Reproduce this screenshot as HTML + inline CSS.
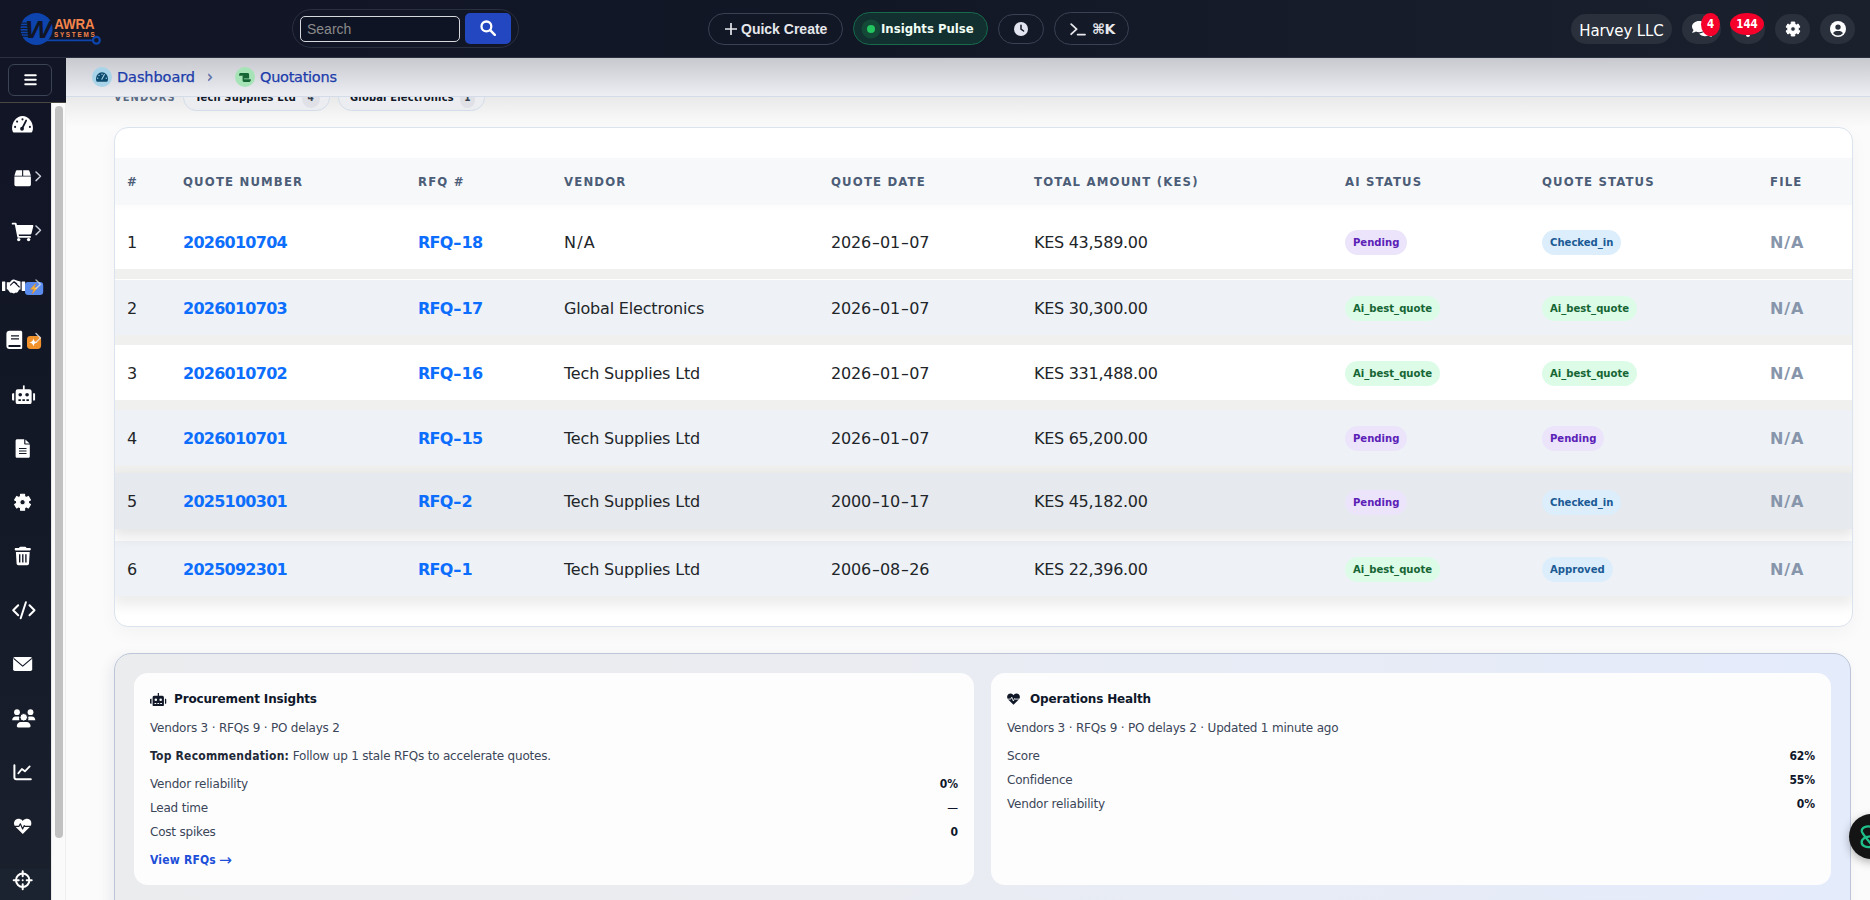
<!DOCTYPE html>
<html lang="en">
<head>
<meta charset="utf-8">
<title>Quotations</title>
<style>
*{box-sizing:border-box;margin:0;padding:0}
html,body{width:1870px;height:900px;overflow:hidden}
body{position:relative;background:#fbfbfc;font-family:"DejaVu Sans","Liberation Sans",sans-serif;font-size:16px;color:#212529}
.abs{position:absolute}
svg{display:block}
/* ---------- header ---------- */
#hdr{left:0;top:0;width:1870px;height:58px;background:linear-gradient(90deg,#111526 0%,#121726 45%,#1a212d 100%);border-bottom:1px solid #2b3040;z-index:30}
.pill{position:absolute;border-radius:999px;display:flex;align-items:center;justify-content:center}
.hp{background:#2a303c}
.bd{background:#f5002a;border-radius:50%;color:#fff;font:bold 11.5px/22px "DejaVu Sans Condensed","DejaVu Sans",sans-serif;text-align:center;z-index:2}
/* ---------- sidebar ---------- */
#sbtop{left:0;top:58px;width:66px;height:45px;background:#111526;border-bottom:1px solid #4a4640;z-index:25}
#side{left:0;top:103px;width:51px;height:797px;background:linear-gradient(180deg,#111526 0%,#131826 45%,#181e2b 85%,#1a202c 100%);z-index:20}
#side svg{position:absolute}
#sfoot{left:0;top:766px;width:51px;height:31px;background:#1b2230}
#strack{left:51px;top:103px;width:15px;height:797px;background:#fafafa;border-left:1px solid #e8e8e8;border-right:1px solid #efefef;z-index:20}
#sthumb{left:55px;top:106px;width:8px;height:732px;background:#c1c1c1;border-radius:4px;z-index:21}
/* ---------- breadcrumb ---------- */
#crumb{left:66px;top:58px;width:1804px;height:39px;background:linear-gradient(180deg,#c8c9cf 0%,#d4d6dc 35%,#eceef3 100%);border-bottom:1px solid #d3dce8;z-index:15;font-size:14.500px;color:#1c3cab;letter-spacing:-.35px;-webkit-text-stroke:.25px #1c3cab}
#crumb .ic{position:absolute;top:9px;width:20px;height:20px;border-radius:50%}
#crumb span{position:absolute;top:9px;line-height:20px;white-space:nowrap}
/* ---------- content ---------- */
#topshade{left:66px;top:97px;width:1804px;height:60px;background:linear-gradient(180deg,#e9e9ea 0%,#f0f0f1 18%,#f7f7f8 36%,#fbfbfb 52%,rgba(251,251,252,0) 100%);z-index:1}
#chips{left:114px;top:84px;height:27px;z-index:2;display:flex;align-items:center;white-space:nowrap}
#chips .lbl{font:bold 11px "DejaVu Sans Condensed","DejaVu Sans",sans-serif;letter-spacing:1.1px;color:#5b6b84;width:69px}
.chip{height:27px;border:1px solid #d3dde9;border-radius:14px;background:#ecedf1;display:flex;align-items:center;padding:0 9px 0 11px;justify-content:space-between;font:bold 11px "DejaVu Sans Condensed","DejaVu Sans",sans-serif;color:#111827;margin-right:8.500px;letter-spacing:.2px}
.chip b{display:inline-block;width:20px;height:20px;border-radius:10px;background:#dfe1e6;color:#374151;text-align:center;line-height:20px;font-size:10px;margin-left:6px}
#card{left:114px;top:127px;width:1739px;height:500px;background:#fff;border:1px solid #dbe3ee;border-radius:14px;box-shadow:0 6px 18px rgba(15,23,42,.035);z-index:3;overflow:hidden}
.row{position:absolute;left:0;width:1737px;height:55px;box-shadow:0 10px 0 0 #f0f0ef}
.row.last{box-shadow:0 8px 12px 2px rgba(0,0,0,.075)}
.row.w{background:#fff}
.row.b{background:#eef2f7}
.row.h .c{padding-top:0}
.row.h .bdg{top:1.500px}
.row.h{background:#e6e9ed;box-shadow:0 6px 12px 2px rgba(0,0,0,.1);z-index:2}
#thead{position:absolute;left:0;top:30px;width:1737px;height:47px;background:#f7f8fa;box-shadow:0 2px 4px 2px rgba(0,0,0,.012)}
.c{position:absolute;top:0;height:100%;display:flex;align-items:center;white-space:nowrap}
#thead .c{font:bold 13px "DejaVu Sans Condensed","DejaVu Sans",sans-serif;letter-spacing:1.17px;color:#4c5d77;padding-bottom:1px}
.c0{left:12px}.c1{left:68px}.c2{left:303px}.c3{left:449px}.c4{left:716px}.c5{left:919px}.c6{left:1230px}.c7{left:1427px}.c8{left:1655px}
.row .c{letter-spacing:-.18px;color:#212529;padding-top:1px}
.hy{display:inline-block;transform:scaleX(1.45);margin:0 1.75px}
.lk .hy{margin:0 1.4px 0 1.6px;transform:scaleX(1.3)}
.row .c5{letter-spacing:-.28px}
.row .lk{font-weight:bold;color:#0d6efd;letter-spacing:-.74px}
.row .na{font-weight:bold;color:#8795ab;letter-spacing:.9px}
.bdg{display:inline-block;position:relative;top:.5px;height:25px;line-height:25px;padding:0 8px;border-radius:13px;font:bold 11.2px/25px "DejaVu Sans Condensed","DejaVu Sans",sans-serif;letter-spacing:0}
.pu{background:#ebe4fb;color:#5b21b6}
.gr{background:#dcfce7;color:#166534}
.bl{background:#dceefb;color:#1b5a94}
/* ---------- insights ---------- */
#ins{left:114px;top:653px;width:1737px;height:270px;border:1px solid #bcc6d8;border-radius:17px;background:linear-gradient(90deg,#ebecee 0%,#eaecf1 40%,#e4ebfb 100%);box-shadow:-4px 4px 14px rgba(15,23,42,.07);z-index:3}
.ic2{position:absolute;top:19px;width:840px;height:212px;background:#fdfdfe;border-radius:14px;font-size:12px;color:#3b4658;letter-spacing:-.2px}
.ic2 .t{position:absolute;left:40px;top:19px;font-weight:bold;font-size:12px;color:#0f172a;letter-spacing:-.16px;line-height:14px}
.ic2 .l{position:absolute;left:16px;line-height:14px;white-space:nowrap}
.ic2 .r{position:absolute;right:16px;line-height:14px;font-weight:bold;color:#0f172a;font-family:"DejaVu Sans Condensed","DejaVu Sans",sans-serif;letter-spacing:-.1px}
.ic2 b{color:#1f2937;font-family:"DejaVu Sans Condensed","DejaVu Sans",sans-serif;letter-spacing:.22px}
#fab{left:1849px;top:814px;width:45px;height:45px;border-radius:50%;background:#141414;z-index:40;box-shadow:0 3px 10px rgba(0,0,0,.3)}
</style>
</head>
<body>
<svg width="0" height="0" style="position:absolute"><defs>
<symbol id="i-gear" viewBox="0 0 24 24"><path fill-rule="evenodd" stroke="currentColor" stroke-width="1.6" stroke-linejoin="round" fill="currentColor" transform="translate(1.2 1.2) scale(.9)" d="M9.02 3.72 L9.02 0.38 L14.98 0.38 L14.98 3.72 L17.68 5.28 L20.57 3.60 L23.56 8.77 L20.66 10.44 L20.66 13.56 L23.56 15.23 L20.57 20.40 L17.68 18.72 L14.98 20.28 L14.98 23.62 L9.02 23.62 L9.02 20.28 L6.32 18.72 L3.43 20.40 L0.44 15.23 L3.34 13.56 L3.34 10.44 L0.44 8.77 L3.43 3.60 L6.32 5.28Z M15.90 12.00 A3.9 3.9 0 1 0 8.10 12.00 A3.9 3.9 0 1 0 15.90 12.00Z"/></symbol>
<symbol id="i-robot" viewBox="0 0 32 26"><path fill="currentColor" fill-rule="evenodd" d="M15 0h2.400v5.500H24a3 3 0 0 1 3 3V23a3 3 0 0 1-3 3H8a3 3 0 0 1-3-3V8.500a3 3 0 0 1 3-3h7zM11.300 10.600a2.500 2.500 0 1 0 0 5 2.500 2.500 0 0 0 0-5zm9.400 0a2.500 2.500 0 1 0 0 5 2.500 2.500 0 0 0 0-5zM8.800 19.400v2.200h3.400v-2.200zm5.500 0v2.200h3.400v-2.200zm5.500 0v2.200h3.400v-2.200zM0 12.500a1.500 1.500 0 0 1 1.500-1.500H3v10H1.500A1.500 1.500 0 0 1 0 19.500zM29 11h1.500a1.500 1.500 0 0 1 1.500 1.500v7a1.500 1.500 0 0 1-1.500 1.500H29z"/></symbol>
<symbol id="i-heart" viewBox="0 0 26 24"><path fill="currentColor" d="M13 23.500L2.300 12.800C-.6 9.900-.5 5.200 2.600 2.500 5.300.1 9.400.6 11.900 3.100L13 4.300l1.100-1.200C16.600.6 20.700.1 23.400 2.500c3.100 2.700 3.200 7.400.3 10.300z"/><path fill="none" stroke="var(--bg)" stroke-width="1.7" stroke-linejoin="round" d="M1 12.200h6.500l2-3.800 3.300 7.600 2.400-5 1 1.200H25"/></symbol>
<symbol id="i-comments" viewBox="0 0 20 16"><path fill="currentColor" d="M7.200 0C3.200 0 0 2.500 0 5.600c0 1.300.6 2.500 1.500 3.400-.3 1.100-1.200 2.100-1.300 2.200-.2.200 0 .500.200.500 1.500 0 2.700-.7 3.400-1.200 1 .4 2.200.7 3.400.7 4 0 7.200-2.500 7.200-5.600S11.200 0 7.200 0z"/><path fill="currentColor" d="M15.800 6.300c-.3 3.400-3.600 5.900-7.800 6.100 1.100 1.700 3.300 2.800 5.800 2.800 1.200 0 2.300-.3 3.300-.7.700.5 1.800 1.200 3.300 1.200.3 0 .400-.3.200-.5 0 0-.9-1.100-1.300-2.200.9-.9 1.500-2 1.500-3.300 0-1.600-1-2.800-2.400-3.500z" transform="translate(-.8 0)"/></symbol>
</defs></svg>
<!-- HEADER -->
<div id="hdr" class="abs">
<svg class="abs" style="left:0;top:0" width="120" height="58" viewBox="0 0 120 58">
<circle cx="36.500" cy="28.900" r="16" fill="#0d44ad"/>
<g fill="#111526"><rect x="20" y="22.600" width="7" height="1"/><rect x="20" y="25.200" width="8.500" height="1.100"/><rect x="20" y="27.900" width="8" height="1.100"/><rect x="20" y="30.600" width="9.500" height="1.100"/><rect x="20.500" y="33.300" width="9" height="1"/><rect x="22" y="35.800" width="9" height="1"/></g>
<text x="25" y="38.200" font-family="Liberation Sans,sans-serif" font-weight="bold" font-style="italic" font-size="23.500" fill="#111526" textLength="26.500" lengthAdjust="spacingAndGlyphs">W</text>
<text x="54.200" y="29.400" font-family="Liberation Sans,sans-serif" font-weight="bold" font-size="15.200" fill="#f5854b" textLength="40.500" lengthAdjust="spacingAndGlyphs">AWRA</text>
<text x="53.900" y="37.100" font-family="Liberation Sans,sans-serif" font-weight="bold" font-size="6.300" fill="#f5854b" textLength="40.800" lengthAdjust="spacing">SYSTEMS</text>
<path d="M46 40.300H93" stroke="#0d44ad" stroke-width="1.700" fill="none"/>
<circle cx="96.400" cy="40.300" r="3.400" fill="#111526" stroke="#0d44ad" stroke-width="2.200"/>
</svg>
<div class="pill" style="left:292px;top:9px;width:227px;height:39px;border:1px solid #2a3040"></div>
<div class="abs" style="left:300px;top:16px;width:160px;height:26px;border:1px solid #d6d8dd;border-radius:5px;background:#0f1424;font:14px/24px 'Liberation Sans',sans-serif;color:#8a8a8a;padding-left:6px">Search</div>
<div class="abs" style="left:465px;top:13px;width:46px;height:31px;border-radius:5px;background:#2347c0"><svg style="position:absolute;left:15px;top:7px" width="16" height="16" viewBox="0 0 16 16"><circle cx="6.4" cy="6.4" r="4.9" fill="none" stroke="#fff" stroke-width="2.3"/><path d="M10.2 10.2L14.8 14.8" stroke="#fff" stroke-width="2.5" stroke-linecap="round"/></svg></div>

<div class="pill" style="left:708px;top:13px;width:135px;height:32px;border:1px solid #394152;font:bold 14px 'Liberation Sans',sans-serif;color:#e5e7eb;justify-content:flex-start;padding-left:32px"><svg style="position:absolute;left:16px;top:9px" width="12" height="12" viewBox="0 0 12 12"><path d="M6 .4V11.6M.4 6H11.6" stroke="#e5e7eb" stroke-width="1.7" stroke-linecap="round"/></svg>Quick Create</div>
<div class="pill" style="left:853px;top:12px;width:135px;height:33px;border:1px solid #176a4c;background:#12302f;font:bold 13px 'DejaVu Sans Condensed','DejaVu Sans',sans-serif;color:#f0fdf4;justify-content:flex-start;padding-left:27px;letter-spacing:0"><i style="position:absolute;left:13px;top:12px;width:8px;height:8px;border-radius:50%;background:#22c55e;box-shadow:0 0 0 5.500px rgba(34,197,94,.17)"></i>Insights Pulse</div>
<div class="pill" style="left:998px;top:14px;width:46px;height:30px;border:1px solid #394152"><svg width="14" height="14" viewBox="0 0 14 14"><circle cx="7" cy="7" r="7" fill="#e2e5f0"/><path d="M7 3.2V7.2L9.6 9" stroke="#121726" stroke-width="1.5" fill="none" stroke-linecap="round" stroke-linejoin="round"/></svg></div>
<div class="pill" style="left:1054px;top:12px;width:75px;height:33px;border:1px solid #394152;font:bold 14px 'DejaVu Sans',sans-serif;color:#e5e7eb;justify-content:flex-start;padding-left:37px;letter-spacing:-.6px"><svg style="position:absolute;left:15px;top:10px" width="16" height="13" viewBox="0 0 16 13"><path d="M1.2 1.2L6.6 6.2L1.2 11.2" stroke="#e5e7eb" stroke-width="1.8" fill="none" stroke-linecap="round" stroke-linejoin="round"/><path d="M7.6 11.6H15" stroke="#e5e7eb" stroke-width="1.8" stroke-linecap="round"/></svg>⌘K</div>

<div class="pill hp" style="left:1571px;top:14px;width:101px;height:30px;font-size:15px;color:#fff;letter-spacing:-.12px;padding-top:3px">Harvey LLC</div>
<div class="pill hp" style="left:1682px;top:14px;width:39px;height:30px"><svg style="position:absolute;left:10px;top:7px" width="20" height="16" viewBox="0 0 20 16"><use href="#i-comments" style="color:#fff"/></svg></div>
<div class="abs bd" style="left:1701px;top:13px;width:19px;height:23px">4</div>
<div class="pill hp" style="left:1731px;top:14px;width:34px;height:30px"><svg style="position:absolute;left:10px;top:7px" width="14" height="16" viewBox="0 0 14 16"><path d="M7 0c.6 0 1 .4 1 1v.6c2.3.5 4 2.500 4 4.900 0 3 1 4.500 1.800 5.300.4.400.1 1.200-.500 1.200H.7c-.6 0-.9-.8-.5-1.200C1 11 2 9.500 2 6.500 2 4.100 3.700 2.100 6 1.600V1c0-.6.400-1 1-1zM5 14h4a2 2 0 0 1-4 0z" fill="#fff"/></svg></div>
<div class="abs bd" style="left:1730px;top:13px;width:34px;height:22px">144</div>
<div class="pill hp" style="left:1775px;top:14px;width:35px;height:30px"><svg width="16" height="16" viewBox="0 0 24 24"><use href="#i-gear" style="color:#fff"/></svg></div>
<div class="pill hp" style="left:1820px;top:14px;width:35px;height:30px"><svg width="16" height="16" viewBox="0 0 16 16"><circle cx="8" cy="8" r="8" fill="#fff"/><circle cx="8" cy="6.1" r="2.7" fill="#2a303c"/><path d="M3.100 12.300C3.700 10.500 5.300 9.900 8 9.900s4.300.6 4.900 2.400A6.200 6.200 0 0 1 8 14.600a6.200 6.200 0 0 1-4.900-2.300z" fill="#2a303c"/></svg></div>
</div>
<!-- SIDEBAR -->
<div id="sbtop" class="abs"><div class="abs" style="left:8px;top:6px;width:44px;height:32px;border:1px solid #3b4354;border-radius:6px"><svg style="position:absolute;left:15px;top:9px" width="13" height="12" viewBox="0 0 13 12"><path d="M1.200 1.300h10.600M1.200 5.800h10.600M1.200 10.300h10.600" stroke="#fff" stroke-width="1.900" stroke-linecap="round"/></svg></div></div>
<div id="side" class="abs"><div id="sfoot" class="abs"></div>
<svg class="abs" style="left:0;top:0" width="51" height="797" viewBox="0 103 51 797" fill="#fff">
<!-- gauge -->
<g transform="translate(22.500 0) scale(.95 1) translate(-22.500 0)">
<path d="M12.300 131.800c-.5-1.200-.8-2.400-.8-3.800 0-6.100 4.900-12 11-12s11 5.900 11 12c0 1.400-.3 2.600-.8 3.800-.2.400-.6.700-1 .7H13.300c-.4 0-.8-.3-1-.7z"/>
<g fill="#111526"><circle cx="22.500" cy="119.300" r="1.100"/><circle cx="16.800" cy="121.600" r="1.100"/><circle cx="14.700" cy="126.900" r="1.100"/><circle cx="30.300" cy="126.900" r="1.100"/><circle cx="22" cy="128.700" r="2"/></g>
<path d="M22 128.700L26.300 120.600" stroke="#111526" stroke-width="1.900" stroke-linecap="round"/>
</g>
<!-- box -->
<path d="M16.900 170.300h5.200v5.400h-7.700l1.500-4.600c.1-.5.500-.8 1-.8zM23.200 170.300h5.200c.5 0 .9.300 1 .8l1.500 4.600h-7.700zM14.400 176.600h16.500v8c0 .9-.7 1.600-1.600 1.600H16c-.9 0-1.600-.7-1.600-1.600z"/>
<path d="M36 172l4.500 4.300-4.500 4.300" fill="none" stroke="#c9cdd8" stroke-width="1.500" stroke-linecap="round" stroke-linejoin="round"/>
<!-- cart -->
<path d="M12.600 222.800h3c.5 0 .9.300 1 .8l.3 1.400h15.500c.6 0 1.100.6.900 1.200l-1.800 7.400c-.1.500-.5.800-1 .8H18.700l.3 1.600h11.100c.5 0 .9.400.9.900s-.4.900-.9.900H18.200c-.5 0-.8-.3-.9-.7l-2.500-12.500h-2.200c-.5 0-.9-.4-.9-.9s.4-.9.900-.9z"/>
<circle cx="18.700" cy="239.600" r="1.700"/><circle cx="28.600" cy="239.600" r="1.700"/>
<path d="M36 226l4.500 4.300-4.500 4.300" fill="none" stroke="#c9cdd8" stroke-width="1.500" stroke-linecap="round" stroke-linejoin="round"/>
<!-- handshake -->
<rect x="2" y="281.600" width="3.300" height="9.300" rx=".5"/><rect x="21.700" y="281.600" width="3.500" height="9.300" rx=".5"/>
<path d="M6.800 282.300l3-.1 2.100-2.200c.6-.6 1.400-.7 2.100-.5l3.500 1.300 3 .6v8l-1.200.2-1.500 2.300c-.5.700-1.400 1-2.200.6l-.6.500c-.7.600-1.700.6-2.400 0l-.8-.2c-.8.200-1.500 0-2-.6l-2-2.600-1-.3z"/>
<path d="M10.500 285.200l3.600-3.500 2.600 1.900M14 281.800l5.300 5.200" fill="none" stroke="#111526" stroke-width="1.100" stroke-linecap="round" stroke-linejoin="round"/>
<rect x="25" y="282" width="18.200" height="13" rx="3.200" fill="#5a8cee"/>
<path d="M35.600 283.600l-5.200 5.700h3.200l-1.400 4.600 5.600-6.400h-3.300z" fill="#f7b731" stroke="#e8842c" stroke-width=".5" stroke-linejoin="round"/>
<path d="M36 280l4.500 4.300-4.500 4.300" fill="none" stroke="#dfe3ea" stroke-opacity=".75" stroke-width="1.400" stroke-linecap="round" stroke-linejoin="round"/>
<!-- book -->
<path fill-rule="evenodd" d="M9.400 330.800h11.200c.9 0 1.600.7 1.600 1.600v15c0 .9-.7 1.600-1.600 1.600H9.400c-1.700 0-3-1.300-3-3v-12.200c0-1.700 1.300-3 3-3zM11 335.300v1.200h8v-1.200zm0 2.900v1.200h8v-1.200zM9.400 344.900c-.6 0-1.100.5-1.100 1.100s.5 1.100 1.100 1.100h11.100v-2.200z"/>
<rect x="27" y="336.100" width="14.100" height="12.900" rx="3.400" fill="#f0912b"/>
<path d="M33.400 338.300c.4 2.700 1.400 3.700 4.100 4.100-2.700.4-3.700 1.400-4.100 4.100-.4-2.700-1.400-3.700-4.100-4.100 2.700-.4 3.700-1.400 4.100-4.100z"/>
<path d="M36 333.600l4.500 4.300-4.500 4.300" fill="none" stroke="#e8ebf0" stroke-opacity=".8" stroke-width="1.400" stroke-linecap="round" stroke-linejoin="round"/>
<!-- robot -->
<svg x="12" y="385.200" width="23.300" height="18.900" viewBox="0 0 32 26" style="color:#fff"><use href="#i-robot"/></svg>
<!-- file -->
<path fill-rule="evenodd" d="M17.200 439.200h7v4.200c0 .7.500 1.200 1.200 1.200h4.400v11.600c0 .9-.7 1.600-1.600 1.600h-11c-.9 0-1.600-.7-1.600-1.600v-15.400c0-.9.700-1.600 1.600-1.600zM25.400 439.500l4.200 4.100h-4.200zM19 447.900v1.100h7.500v-1.100zm0 2.500v1.100h7.500v-1.100zm0 2.500v1.100h7.500v-1.100z"/>
<!-- gear -->
<svg x="13.400" y="493" width="18.300" height="18.400" viewBox="0 0 24 24" style="color:#fff"><use href="#i-gear"/></svg>
<!-- trash -->
<path fill-rule="evenodd" d="M20.300 546.700h4.900c.4 0 .8.200.9.600l.4.800h3.500c.5 0 .8.400.8.800v.7c0 .5-.4.800-.8.800H15.500c-.5 0-.8-.4-.8-.8v-.7c0-.5.400-.8.800-.8H19l.4-.8c.2-.4.500-.6.900-.6zM15.900 552h13.800l-.7 11.600c-.1.900-.8 1.600-1.700 1.600h-9c-.9 0-1.600-.7-1.700-1.600zM19 554.200v8.300h1.400v-8.300zm3.100 0v8.300h1.400v-8.300zm3.100 0v8.300h1.400v-8.300z"/>
<!-- code -->
<path d="M18.200 605.200l-5 5 5 5M29.500 605.200l5 5-5 5M25.900 602.200l-5.200 16" fill="none" stroke="#fff" stroke-width="2" stroke-linecap="round" stroke-linejoin="round"/>
<!-- envelope -->
<rect x="13.100" y="657" width="19.100" height="14.100" rx="1.800"/>
<path d="M13.600 658.400l9.100 7.700 9.100-7.700" fill="none" stroke="#111526" stroke-width="1.200" stroke-linejoin="round"/>
<!-- users -->
<circle cx="17" cy="712.200" r="2.900"/><circle cx="30.500" cy="712.200" r="2.900"/><circle cx="23.700" cy="717.300" r="3.800" stroke="#131827" stroke-width="1"/>
<path d="M12.200 720.200c0-2 1.500-3.600 3.400-3.600h2.400c.5 0 1 .1 1.400.3-.5 1.100-.4 2.300.1 3.300zM35.300 720.200c0-2-1.500-3.600-3.400-3.600h-2.400c-.5 0-1 .1-1.400.3.500 1.100.4 2.300-.1 3.300zM16.800 726c0-2.200 1.800-4 4-4h5.800c2.200 0 4 1.800 4 4 0 .8-.6 1.400-1.400 1.400H18.200c-.8 0-1.400-.6-1.400-1.400z"/>
<!-- chart -->
<path d="M14.400 765.200v12c0 1.100.9 2 2 2h14.400" fill="none" stroke="#fff" stroke-width="2" stroke-linecap="round"/>
<path d="M18.300 773.300l3.600-4.300 3 2.300 4.800-4.900" fill="none" stroke="#fff" stroke-width="1.800" stroke-linecap="round" stroke-linejoin="round"/>
<!-- heart -->
<svg x="13.300" y="818" width="18.900" height="16.400" viewBox="0 0 26 24" style="color:#fff;--bg:#181e2b"><use href="#i-heart"/></svg>
<!-- crosshair -->
<circle cx="22.700" cy="880.300" r="6.700" fill="none" stroke="#fff" stroke-width="2"/>
<path d="M22.700 871.300v5M22.700 884.300v5M13.700 880.300h5M26.700 880.300h5" stroke="#fff" stroke-width="2" stroke-linecap="round"/>
<circle cx="22.700" cy="880.300" r="1"/>
</svg>
</div>
<div id="strack" class="abs"></div>
<div id="sthumb" class="abs"></div>
<!-- BREADCRUMB -->
<div id="crumb" class="abs">
<div class="ic" style="left:26px;background:#a8d3e8"><svg style="position:absolute;left:4px;top:5px" width="12" height="10" viewBox="11.5 115.900 22 17"><path fill="#0c4a6e" d="M12.300 132.200c-.5-1.200-.8-2.600-.8-4 0-6.100 4.900-12.300 11-12.300s11 6.200 11 12.300c0 1.400-.3 2.800-.8 4-.2.400-.6.700-1 .7H13.300c-.4 0-.8-.3-1-.7z"/><g fill="#a8d3e8"><circle cx="22.500" cy="119.400" r="1.200"/><circle cx="17" cy="121.500" r="1.200"/><circle cx="14.700" cy="126.700" r="1.200"/><circle cx="30.300" cy="126.700" r="1.200"/></g><path d="M22.200 128.400L26.900 119.800" stroke="#a8d3e8" stroke-width="2" stroke-linecap="round"/></svg></div>
<span style="left:51px;letter-spacing:-.08px">Dashboard</span>
<span style="left:141px;color:#6b7a99;font-size:15px">›</span>
<div class="ic" style="left:169px;background:#a6e3b6"><svg style="position:absolute;left:4px;top:5.500px" width="12" height="9.500" viewBox="0 0 12 11" preserveAspectRatio="none"><path fill="#166534" d="M1.600 0h6.900c.9 0 1.600.7 1.600 1.600v4.900H4.300v-3.300H.1V1.500C.1.700.8 0 1.600 0zM4.900 7.200h6.900v1.300c0 1.100-.9 2-2 2H5.400c-1 0-1.800-.8-1.800-1.800V3.500h1.300z"/></svg></div>
<span style="left:194px;letter-spacing:-.27px">Quotations</span>
</div>
<div id="topshade" class="abs"></div>
<!-- CHIPS -->
<div id="chips" class="abs"><span class="lbl">VENDORS</span><span class="chip" style="width:146.500px">Tech Supplies Ltd<b>4</b></span><span class="chip" style="width:147px">Global Electronics<b>1</b></span></div>
<!-- TABLE CARD -->
<div id="card" class="abs">
<div id="thead"><div class="c c0">#</div><div class="c c1">QUOTE NUMBER</div><div class="c c2">RFQ #</div><div class="c c3">VENDOR</div><div class="c c4">QUOTE DATE</div><div class="c c5">TOTAL AMOUNT (KES)</div><div class="c c6">AI STATUS</div><div class="c c7">QUOTE STATUS</div><div class="c c8">FILE</div></div>
<div class="row w" style="top:86px"><div class="c c0">1</div><div class="c c1 lk">2026010704</div><div class="c c2 lk rf">RFQ<span class="hy">-</span>18</div><div class="c c3" style="letter-spacing:1.200px">N/A</div><div class="c c4 dt">2026<span class="hy">-</span>01<span class="hy">-</span>07</div><div class="c c5">KES 43,589.00</div><div class="c c6"><span class="bdg pu">Pending</span></div><div class="c c7"><span class="bdg bl">Checked_in</span></div><div class="c c8 na">N/A</div></div>
<div class="row b" style="top:152px"><div class="c c0">2</div><div class="c c1 lk">2026010703</div><div class="c c2 lk rf">RFQ<span class="hy">-</span>17</div><div class="c c3">Global Electronics</div><div class="c c4 dt">2026<span class="hy">-</span>01<span class="hy">-</span>07</div><div class="c c5">KES 30,300.00</div><div class="c c6"><span class="bdg gr">Ai_best_quote</span></div><div class="c c7"><span class="bdg gr">Ai_best_quote</span></div><div class="c c8 na">N/A</div></div>
<div class="row w" style="top:217px"><div class="c c0">3</div><div class="c c1 lk">2026010702</div><div class="c c2 lk rf">RFQ<span class="hy">-</span>16</div><div class="c c3">Tech Supplies Ltd</div><div class="c c4 dt">2026<span class="hy">-</span>01<span class="hy">-</span>07</div><div class="c c5">KES 331,488.00</div><div class="c c6"><span class="bdg gr">Ai_best_quote</span></div><div class="c c7"><span class="bdg gr">Ai_best_quote</span></div><div class="c c8 na">N/A</div></div>
<div class="row b" style="top:282px"><div class="c c0">4</div><div class="c c1 lk">2026010701</div><div class="c c2 lk rf">RFQ<span class="hy">-</span>15</div><div class="c c3">Tech Supplies Ltd</div><div class="c c4 dt">2026<span class="hy">-</span>01<span class="hy">-</span>07</div><div class="c c5">KES 65,200.00</div><div class="c c6"><span class="bdg pu">Pending</span></div><div class="c c7"><span class="bdg pu">Pending</span></div><div class="c c8 na">N/A</div></div>
<div class="row h" style="top:345px;height:56px"><div class="c c0">5</div><div class="c c1 lk">2025100301</div><div class="c c2 lk rf">RFQ<span class="hy">-</span>2</div><div class="c c3">Tech Supplies Ltd</div><div class="c c4 dt">2000<span class="hy">-</span>10<span class="hy">-</span>17</div><div class="c c5">KES 45,182.00</div><div class="c c6"><span class="bdg pu">Pending</span></div><div class="c c7"><span class="bdg bl">Checked_in</span></div><div class="c c8 na">N/A</div></div>
<div class="row b last" style="top:413px"><div class="c c0">6</div><div class="c c1 lk">2025092301</div><div class="c c2 lk rf">RFQ<span class="hy">-</span>1</div><div class="c c3">Tech Supplies Ltd</div><div class="c c4 dt">2006<span class="hy">-</span>08<span class="hy">-</span>26</div><div class="c c5">KES 22,396.00</div><div class="c c6"><span class="bdg gr">Ai_best_quote</span></div><div class="c c7"><span class="bdg bl">Approved</span></div><div class="c c8 na">N/A</div></div>
</div>
<!-- INSIGHTS -->
<div id="ins" class="abs">
<div class="ic2" style="left:19px">
<svg style="position:absolute;left:16px;top:20px" width="16.500" height="13.400" viewBox="0 0 32 26"><use href="#i-robot" style="color:#111827"/></svg>
<div class="t">Procurement Insights</div>
<div class="l" style="top:48px">Vendors 3 · RFQs 9 · PO delays 2</div>
<div class="l" style="top:76px"><b>Top Recommendation:</b> Follow up 1 stale RFQs to accelerate quotes.</div>
<div class="l" style="top:104px">Vendor reliability</div><div class="r" style="top:104px">0%</div>
<div class="l" style="top:128px">Lead time</div><div class="r" style="top:128px;font-weight:normal">—</div>
<div class="l" style="top:152px">Cost spikes</div><div class="r" style="top:152px">0</div>
<div class="l" style="top:180px;color:#1d4fd8;font-weight:bold;font-family:'DejaVu Sans Condensed','DejaVu Sans',sans-serif;letter-spacing:.2px">View RFQs <span style="font:normal 15.5px/0 'DejaVu Sans',sans-serif;position:relative;top:1px;margin-left:-1px">→</span></div>
</div>
<div class="ic2" style="left:876px">
<svg style="position:absolute;left:16px;top:20px" width="13" height="12" viewBox="0 0 26 24"><use href="#i-heart" style="color:#111827;--bg:#fdfdfe"/></svg>
<div class="t" style="left:39px">Operations Health</div>
<div class="l" style="top:48px">Vendors 3 · RFQs 9 · PO delays 2 · Updated 1 minute ago</div>
<div class="l" style="top:76px">Score</div><div class="r" style="top:76px">62%</div>
<div class="l" style="top:100px">Confidence</div><div class="r" style="top:100px">55%</div>
<div class="l" style="top:124px">Vendor reliability</div><div class="r" style="top:124px">0%</div>
</div>
</div>
<div id="fab" class="abs"><svg style="position:absolute;left:0;top:0" width="22" height="45" viewBox="0 0 22 45"><path d="M21.500 12.700C17 11.800 12.500 13.800 12.800 17.200c.3 2.600 3 5.300 8.700 12M21.500 22.300c-5 .5-9 2.700-8.800 6.300.2 3.500 4.300 5 8.800 4.300" fill="none" stroke="#1fbf8a" stroke-width="2.300" stroke-linecap="round"/></svg></div>
</body>
</html>
